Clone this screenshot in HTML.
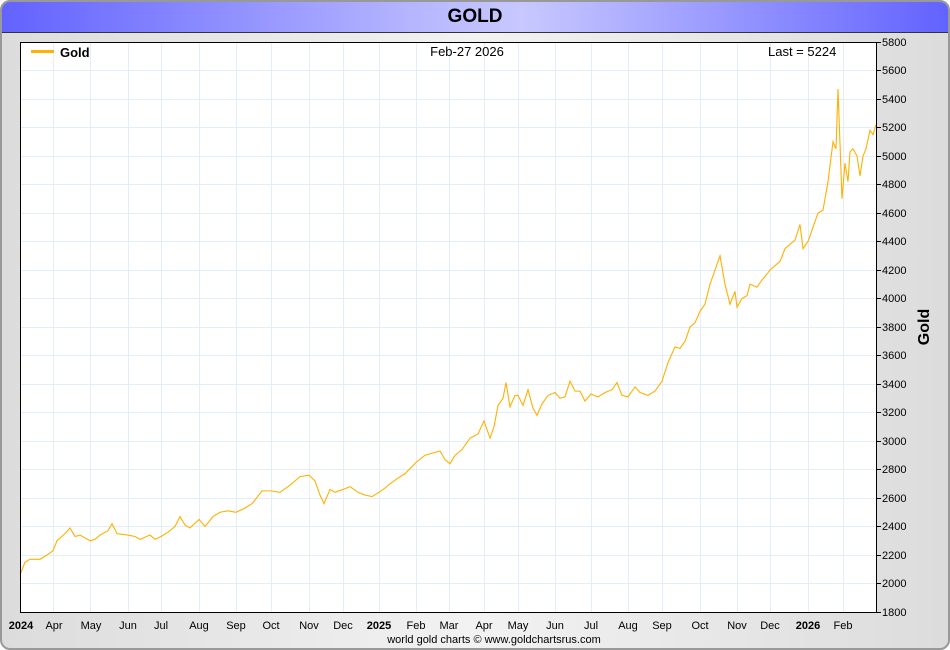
<!DOCTYPE html>
<html><head><meta charset="utf-8"><style>
body{margin:0;width:950px;height:650px;background:#fff;overflow:hidden;font-family:"Liberation Sans",Arial,sans-serif}
.frame{position:absolute;left:0;top:0;width:946px;height:646px;border:2px solid #999;border-radius:10px;background:linear-gradient(90deg,#dcdcdc,#f2f2f2 50%,#dcdcdc);overflow:hidden}
.title{position:absolute;left:0;top:0;width:946px;height:30px;background:linear-gradient(90deg,#6262ff,#b8b8ff 45%,#c8c8ff 55%,#6262ff);border-bottom:1px solid #333;text-align:center;font-weight:bold;font-size:19px;line-height:30px;color:#000}
svg{position:absolute;left:0;top:0}
</style></head><body>
<div class="frame"><div class="title">GOLD</div></div>
<svg width="950" height="650" font-family="Liberation Sans, Arial, sans-serif">
<rect x="20" y="42" width="856" height="570" fill="#fff"/>
<g stroke="#e3eef8" stroke-width="1">
<path d="M53.5 42V612M90.5 42V612M128.5 42V612M161.5 42V612M199.5 42V612M236.5 42V612M271.5 42V612M309.5 42V612M343.5 42V612M379.5 42V612M416.5 42V612M449.5 42V612M484.5 42V612M518.5 42V612M555.5 42V612M591.5 42V612M628.5 42V612M662.5 42V612M700.5 42V612M737.5 42V612M770.5 42V612M808.5 42V612M843.5 42V612"/>
<path d="M20 70.5H876M20 99.5H876M20 127.5H876M20 156.5H876M20 184.5H876M20 213.5H876M20 241.5H876M20 270.5H876M20 298.5H876M20 327.5H876M20 355.5H876M20 384.5H876M20 412.5H876M20 441.5H876M20 469.5H876M20 498.5H876M20 526.5H876M20 555.5H876M20 583.5H876"/>
</g>
<g transform="translate(0,612) scale(1,-0.1425) translate(0,-1800)">
<polyline fill="none" stroke="#ffb000" stroke-width="1.1" vector-effect="non-scaling-stroke" points="20,2060 25,2150 30,2170 40,2170 47,2200 53,2230 57,2300 65,2350 70,2390 75,2330 80,2340 90,2300 95,2310 100,2340 108,2370 112,2420 117,2350 128,2340 135,2330 140,2310 150,2340 155,2310 161,2330 168,2360 175,2400 180,2470 185,2410 190,2390 199,2450 205,2400 213,2470 220,2500 228,2510 236,2500 245,2530 252,2560 262,2650 271,2650 280,2640 290,2690 300,2750 309,2760 315,2720 320,2620 324,2560 330,2660 335,2640 343,2660 350,2680 358,2640 365,2620 372,2610 379,2640 385,2670 390,2700 398,2740 405,2770 416,2850 425,2900 435,2920 440,2930 445,2870 450,2840 455,2900 462,2940 470,3020 478,3050 484,3140 490,3020 494,3100 498,3250 503,3300 506,3410 510,3240 515,3320 518,3320 523,3250 528,3360 533,3230 537,3180 542,3260 548,3320 555,3340 560,3300 565,3310 570,3420 575,3350 580,3350 585,3280 591,3330 598,3310 605,3340 612,3360 617,3410 622,3320 628,3310 635,3380 640,3340 648,3320 655,3350 662,3420 668,3550 675,3660 680,3650 685,3700 690,3800 695,3830 700,3910 705,3960 710,4100 715,4200 720,4300 725,4100 730,3960 735,4050 737,3940 742,4000 747,4020 750,4100 757,4080 762,4130 768,4180 770,4200 775,4230 780,4260 785,4350 790,4380 795,4410 800,4520 803,4350 808,4400 812,4480 818,4600 823,4620 828,4820 833,5100 836,5050 838,5470 842,4700 845,4950 848,4820 850,5030 853,5050 857,5000 860,4860 863,5000 866,5050 870,5180 873,5150 876,5220"/>
</g>
<rect x="20.5" y="42.5" width="856" height="570" fill="none" stroke="#000"/>
<g stroke="#000"><path d="M876 42.5h5M876 70.5h5M876 99.5h5M876 127.5h5M876 156.5h5M876 184.5h5M876 213.5h5M876 241.5h5M876 270.5h5M876 298.5h5M876 327.5h5M876 355.5h5M876 384.5h5M876 412.5h5M876 441.5h5M876 469.5h5M876 498.5h5M876 526.5h5M876 555.5h5M876 583.5h5M876 612.5h5"/></g>
<g font-size="11" fill="#000">
<text x="882" y="46">5800</text><text x="882" y="74">5600</text><text x="882" y="103">5400</text><text x="882" y="131">5200</text><text x="882" y="160">5000</text><text x="882" y="188">4800</text><text x="882" y="217">4600</text><text x="882" y="245">4400</text><text x="882" y="274">4200</text><text x="882" y="302">4000</text><text x="882" y="331">3800</text><text x="882" y="359">3600</text><text x="882" y="388">3400</text><text x="882" y="416">3200</text><text x="882" y="445">3000</text><text x="882" y="473">2800</text><text x="882" y="502">2600</text><text x="882" y="530">2400</text><text x="882" y="559">2200</text><text x="882" y="587">2000</text><text x="882" y="616">1800</text>
</g>
<g font-size="11" fill="#000" text-anchor="middle">
<text x="21" y="629" font-weight="bold">2024</text><text x="54" y="629">Apr</text><text x="91" y="629">May</text><text x="128" y="629">Jun</text><text x="161" y="629">Jul</text><text x="199" y="629">Aug</text><text x="236" y="629">Sep</text><text x="271" y="629">Oct</text><text x="309" y="629">Nov</text><text x="343" y="629">Dec</text><text x="379" y="629" font-weight="bold">2025</text><text x="416" y="629">Feb</text><text x="449" y="629">Mar</text><text x="484" y="629">Apr</text><text x="518" y="629">May</text><text x="555" y="629">Jun</text><text x="591" y="629">Jul</text><text x="628" y="629">Aug</text><text x="662" y="629">Sep</text><text x="700" y="629">Oct</text><text x="737" y="629">Nov</text><text x="770" y="629">Dec</text><text x="808" y="629" font-weight="bold">2026</text><text x="843" y="629">Feb</text>
<text x="494" y="643">world gold charts © www.goldchartsrus.com</text>
</g>
<rect x="31" y="50" width="23" height="3" fill="#ffb000"/>
<text x="60" y="57" font-size="13" font-weight="bold">Gold</text>
<text x="467" y="56" font-size="13" text-anchor="middle">Feb-27  2026</text>
<text x="768" y="56" font-size="13">Last = 5224</text>
<text transform="translate(929,327) rotate(-90)" font-size="16" font-weight="bold" text-anchor="middle">Gold</text>
</svg>
</body></html>
